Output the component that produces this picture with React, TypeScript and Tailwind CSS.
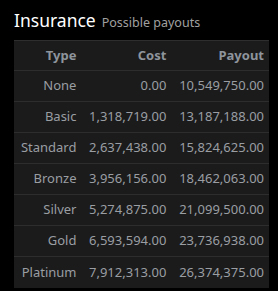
import React from 'react';

const rows = [
  { type: 'None', cost: '0.00', payout: '10,549,750.00' },
  { type: 'Basic', cost: '1,318,719.00', payout: '13,187,188.00' },
  { type: 'Standard', cost: '2,637,438.00', payout: '15,824,625.00' },
  { type: 'Bronze', cost: '3,956,156.00', payout: '18,462,063.00' },
  { type: 'Silver', cost: '5,274,875.00', payout: '21,099,500.00' },
  { type: 'Gold', cost: '6,593,594.00', payout: '23,736,938.00' },
  { type: 'Platinum', cost: '7,912,313.00', payout: '26,374,375.00' },
];

const App: React.FC = () => {
  return (
    <div className="w-[278px] h-[291px] bg-black pl-[14px] pr-[9px] pt-[7px] font-['Noto_Sans',sans-serif]">
      <div className="flex items-baseline h-[33px]">
        <h1 className="text-[17.5px] text-white leading-[26px]">Insurance</h1>
        <span className="ml-[6px] text-[12.5px] text-[#a0a0a0]">Possible payouts</span>
      </div>
      <table className="w-full bg-[#1b1b1b] border-t border-[#2e2e2e] text-[13px] border-collapse">
        <thead>
          <tr className="h-[30px] border-b border-[#2d2d2d]">
            <th className="text-right font-bold text-[#8e949c] px-[5px]">Type</th>
            <th className="text-right font-bold text-[#8e949c] px-[5px]">Cost</th>
            <th className="text-right font-bold text-[#8e949c] px-[5px]">Payout</th>
          </tr>
        </thead>
        <tbody>
          {rows.map((r, i) => (
            <tr key={r.type} className={`h-[31px] ${i < rows.length - 1 ? 'border-b border-[#2d2d2d]' : ''}`}>
              <td className="text-right text-[#9a9ea3] px-[5px] whitespace-nowrap">{r.type}</td>
              <td className="text-right text-[#9a9ea3] px-[5px] whitespace-nowrap">{r.cost}</td>
              <td className="text-right text-[#9a9ea3] px-[5px] whitespace-nowrap">{r.payout}</td>
            </tr>
          ))}
        </tbody>
      </table>
    </div>
  );
};

export default App;
